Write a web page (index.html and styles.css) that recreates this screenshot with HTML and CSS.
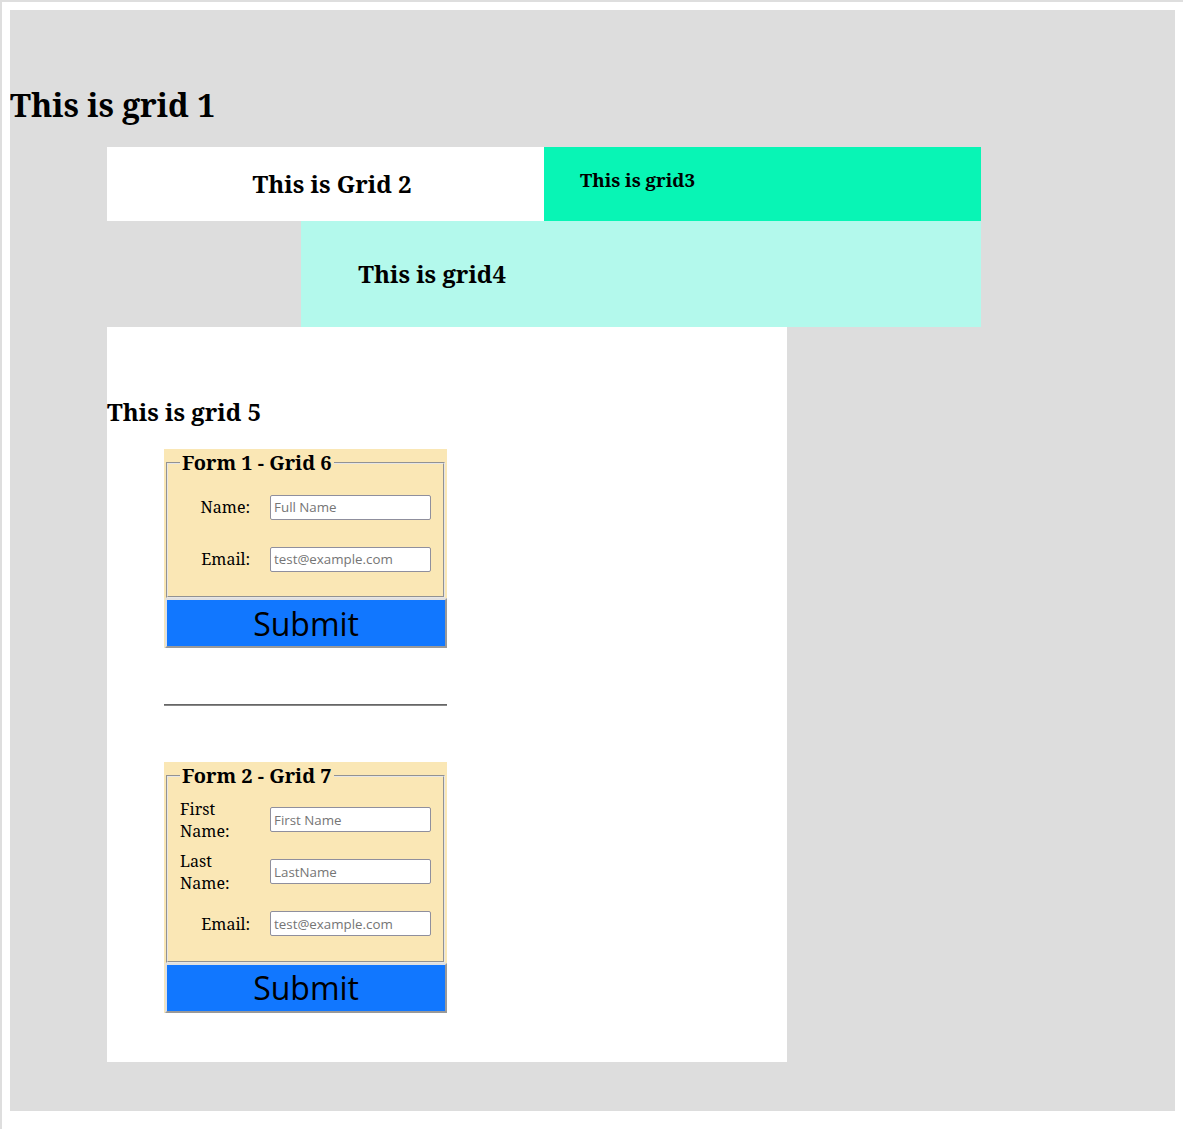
FILE: index.html
```html
<!DOCTYPE html>
<html lang="en">
<head>
<meta charset="utf-8">
<title>Grids</title>
<link rel="stylesheet" href="styles.css">
</head>
<body>
  <h1 class="g1">This is grid 1</h1>
  <div class="row23">
    <div class="g2"><h2>This is Grid 2</h2></div>
    <div class="g3"><h3>This is grid3</h3></div>
  </div>
  <div class="g4"><h2>This is grid4</h2></div>
  <div class="g5">
    <h2>This is grid 5</h2>
    <form class="form-box">
      <fieldset>
        <legend>Form 1 - Grid 6</legend>
        <div class="fields">
          <label for="n1">Name:</label>
          <input id="n1" type="text" placeholder="Full Name">
          <label for="e1">Email:</label>
          <input id="e1" type="email" placeholder="test@example.com">
        </div>
      </fieldset>
      <button type="button" class="submit">Submit</button>
    </form>
    <hr class="sep">
    <form class="form-box">
      <fieldset>
        <legend>Form 2 - Grid 7</legend>
        <div class="fields">
          <label for="f2">First Name:</label>
          <input id="f2" type="text" placeholder="First Name">
          <label for="l2">Last Name:</label>
          <input id="l2" type="text" placeholder="LastName">
          <label for="e2">Email:</label>
          <input id="e2" type="email" placeholder="test@example.com">
        </div>
      </fieldset>
      <button type="button" class="submit">Submit</button>
    </form>
  </div>
</body>
</html>
```
FILE: styles.css
```css
html {
  background: #fff;
  border-top: 2px solid #dedede;
  border-left: 2px solid #dedede;
  min-height: 100vh;
  box-sizing: border-box;
}
body {
  margin: 8px;
  background: #dddddd;
  display: grid;
  grid-template-columns: repeat(12, 1fr);
  grid-template-rows: 137px 74px 106px 735px;
  padding-bottom: 49px;
  font-family: "Noto Serif", "DejaVu Serif", serif;
  color: #000;
}
.g1 {
  grid-column: 1 / -1;
  align-self: end;
  font-size: 32px;
  margin: 21.44px 0;
}
.row23 {
  grid-column: 2 / 11;
  display: grid;
  grid-template-columns: 1fr 1fr;
}
.g2 {
  background: #fff;
  text-align: center;
  padding-left: 13px;
}
.g3 {
  background: #08f5b5;
  padding-left: 36px;
}
h2 {
  font-size: 24px;
  margin: 19.92px 0;
}
h3 {
  font-size: 18.72px;
  margin: 19.5px 0;
}
.g4 {
  grid-column: 4 / 11;
  background: #b3f9ec;
  padding: 16px 0 0 57px;
}
.g5 {
  grid-column: 2 / 9;
  background: #fff;
  padding-top: 48px;
  display: flex;
  flex-direction: column;
  align-items: flex-start;
}
.g5 h2 {
  margin-bottom: 21.5px;
}
.form-box {
  width: 283px;
  margin: 0 0 48px 57px;
  background: #fae7b5;
}
fieldset {
  margin: 0 2px;
  padding: 4.6px 12px 11px;
  border: 2px groove #e6e6e6;
}
legend {
  padding: 0 2px;
  font-size: 20px;
  font-weight: bold;
}
.fields {
  display: grid;
  grid-template-columns: 70px 1fr;
  column-gap: 20px;
  grid-auto-rows: 52px;
  align-items: center;
}
.fields label {
  justify-self: end;
  font-size: 16px;
}
.fields input {
  box-sizing: border-box;
  width: 100%;
  height: 25px;
  margin: 0;
  padding: 1px 3px;
  font-family: "Open Sans", sans-serif;
  font-size: 13.33px;
  border: 1px solid #8f8f9d;
  border-radius: 2px;
  background: #fff;
}
.fields input::placeholder {
  color: #757575;
}
.submit {
  display: block;
  box-sizing: border-box;
  width: 282px;
  height: 50px;
  margin: 0 0 0 1px;
  padding: 0 6px;
  background: #1177ff;
  border: 2px solid;
  border-color: #e0e0e0 #999 #999 #e0e0e0;
  font-family: "Open Sans", sans-serif;
  font-size: 32px;
  color: #000;
}
.sep {
  width: 283px;
  box-sizing: border-box;
  margin: 8px 0 56px 57px;
  border: 0;
  border-top: 1px solid #666;
  border-bottom: 1px solid #888;
}
```
